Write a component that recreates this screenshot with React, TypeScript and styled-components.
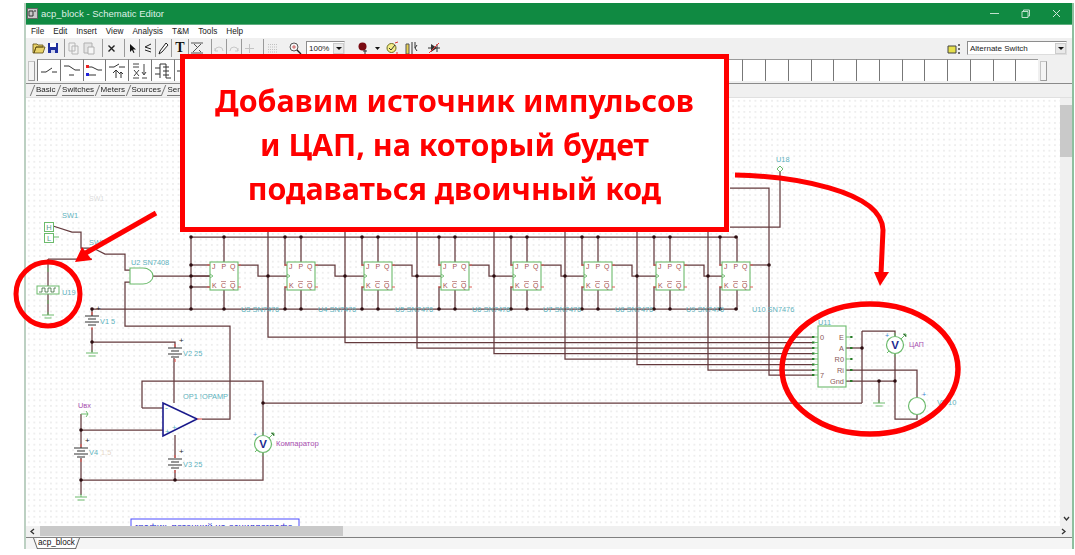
import React from "react";
import styled, { createGlobalStyle } from "styled-components";

const Global = createGlobalStyle`
  html, body { margin: 0; padding: 0; background: #fff; overflow: hidden; }
  body { font-family: "Liberation Sans", Arial, sans-serif; }
`;

const Page = styled.div`
  position: relative;
  width: 1075px;
  height: 555px;
  box-sizing: border-box;
  padding: 3px 1px 0 24px;
  overflow: hidden;
  background: #fff;
`;

const Win = styled.div`
  display: flex;
  flex-direction: column;
  height: 546px;
  border-left: 2px solid #bcd0c2;
  border-right: 2px solid #8fbf9f;
  filter: blur(0.4px);
`;

const TitleBar = styled.div`
  height: 21px;
  flex: none;
  display: flex;
  align-items: center;
  background: #108a42;
  border-bottom: 1px solid #5fae80;
  color: #dff0e6;
  font-size: 9.5px;
  padding-left: 1px;
`;
const TitleText = styled.span`
  margin-left: 3px;
  flex: 1;
`;
const WinControl = styled.span`
  width: 31px;
  display: flex;
  justify-content: center;
  align-items: center;
`;
const MenuBar = styled.div`
  height: 13px;
  flex: none;
  background: #fff;
  display: flex;
  align-items: center;
  padding-left: 5px;
  gap: 9px;
  font-size: 8.2px;
  color: #222;
`;
const Toolbar = styled.div`
  height: 20px;
  flex: none;
  background: #f0f0f0;
  display: flex;
  align-items: center;
  padding-left: 5px;
`;
const Tool = styled.div<{ $w?: number; $ml?: number; $box?: boolean }>`
  width: ${(p) => p.$w ?? 15}px;
  height: 18px;
  flex: none;
  margin-left: ${(p) => p.$ml ?? 0}px;
  display: flex;
  align-items: center;
  justify-content: center;
  box-sizing: border-box;
  border-left: ${(p) => (p.$box ? "1px solid #9a9a9a" : "none")};
`;
const Combo = styled.div<{ $w: number; $ml?: number }>`
  width: ${(p) => p.$w}px;
  height: 14px;
  flex: none;
  margin-left: ${(p) => p.$ml ?? 0}px;
  box-sizing: border-box;
  border: 1px solid #8d8d8d;
  border-right-color: #ddd;
  border-bottom-color: #ddd;
  background: #fff;
  display: flex;
  align-items: center;
  font-size: 8px;
  color: #222;
  padding-left: 2px;
`;
const ComboText = styled.span`
  flex: 1;
  white-space: nowrap;
`;
const ComboDrop = styled.span`
  width: 11px;
  height: 11px;
  background: #e9e9e9;
  border: 1px solid #ccc;
  box-sizing: border-box;
  display: flex;
  align-items: center;
  justify-content: center;
  &::after {
    content: "";
    border-left: 3px solid transparent;
    border-right: 3px solid transparent;
    border-top: 3px solid #111;
  }
`;
const Spacer = styled.div`
  flex: 1;
`;
const PaletteRow = styled.div`
  height: 26px;
  flex: none;
  background: #f0f0f0;
  display: flex;
  align-items: flex-end;
  padding: 0 0 2px 2px;
  box-sizing: border-box;
  border-bottom: 1px solid #8a8a8a;
`;
const Handle = styled.div<{ $ml: number; $mr?: number }>`
  width: 7px;
  height: 20px;
  flex: none;
  margin-left: ${(p) => p.$ml}px;
  margin-right: ${(p) => p.$mr ?? 0}px;
  background: #f4f4f4;
  border: 1px solid #c4c4c4;
  border-right-color: #9a9a9a;
  border-bottom-color: #9a9a9a;
  box-sizing: border-box;
`;
const Cell = styled.div`
  width: 22.75px;
  height: 22px;
  flex: none;
  box-sizing: border-box;
  background: #fff;
  border-left: 1px solid #777;
  border-top: 1px solid #9a9a9a;
  display: flex;
  align-items: center;
  justify-content: center;
`;
const TabRow = styled.div`
  height: 13px;
  flex: none;
  background: #f0f0f0;
  display: flex;
  padding-left: 10px;
  gap: 6.5px;
  align-items: center;
  font-size: 8px;
  color: #222;
  border-bottom: 1px solid #e0e0e0;
`;
const Tab = styled.span`
  position: relative;
  border-bottom: 1px solid #777;
  line-height: 10px;
  white-space: nowrap;
  &::before {
    content: "";
    position: absolute;
    left: -4px;
    top: 0;
    height: 11px;
    border-left: 1px solid #777;
    transform: skewX(-22deg);
  }
`;
const Middle = styled.div`
  flex: 1;
  min-height: 0;
  display: flex;
`;
const Canvas = styled.div`
  flex: 1;
  position: relative;
  overflow: hidden;
  background-color: #fff;
  background-image: radial-gradient(circle, #dcdcdc 0.55px, transparent 0.75px);
  background-size: 5.55px 5.55px;
`;
const VScroll = styled.div`
  width: 12px;
  flex: none;
  background: #f0f0f0;
  display: flex;
  flex-direction: column;
  align-items: center;
  padding: 5px 0 4px;
  box-sizing: border-box;
`;
const VThumb = styled.div`
  width: 100%;
  height: 52px;
  margin-top: 2px;
  background: #c9c9c9;
`;
const HScroll = styled.div`
  height: 12px;
  flex: none;
  background: #f0f0f0;
  display: flex;
  align-items: center;
  border-bottom: 1px solid #808080;
  box-sizing: border-box;
  padding: 0 5px 0 3px;
`;
const HThumb = styled.div`
  width: 303px;
  height: 10px;
  margin-left: 4px;
  background: #c9c9c9;
  align-self: flex-start;
`;
const BottomTabs = styled.div`
  height: 11px;
  flex: none;
  background: #f5f5f5;
  padding-left: 11px;
  font-size: 8.2px;
  color: #111;
`;
const SheetTab = styled.span`
  position: relative;
  display: inline-block;
  padding: 0 1px;
  height: 11px;
  line-height: 10px;
  background: #fff;
  border-bottom: 1px solid #777;
  box-sizing: border-box;
  &::before,
  &::after {
    content: "";
    position: absolute;
    top: 0;
    height: 11px;
    border-left: 1px solid #666;
  }
  &::before {
    left: -2px;
    transform: skewX(20deg);
  }
  &::after {
    right: -2px;
    transform: skewX(-20deg);
  }
`;
const Overlay = styled.svg`
  position: absolute;
  left: 0;
  top: 0;
  pointer-events: none;
`;
const Callout = styled.div`
  position: absolute;
  left: 180px;
  top: 54px;
  width: 549px;
  height: 178px;
  box-sizing: border-box;
  border: 5px solid #ff0000;
  padding-top: 3px;
  background: #fff;
  display: flex;
  flex-direction: column;
  justify-content: center;
  align-items: center;
  color: #ff0000;
  font-family: "Noto Sans", "Open Sans", sans-serif;
  font-weight: 700;
  font-size: 30.4px;
  line-height: 44px;
  filter: blur(0.25px);
`;
const Line = styled.div`
  white-space: nowrap;
`;

const Ic = ({ children, w = 14, h = 14 }: { children: React.ReactNode; w?: number; h?: number }) => (
  <svg width={w} height={h} viewBox={`0 0 ${w} ${h}`} fill="none">
    {children}
  </svg>
);
const Chevron = ({ d }: { d: string }) => (
  <Ic w={7} h={7}><path d={d} stroke="#333" strokeWidth="1.3" /></Ic>
);

const WIRE = "#643a3d";
const GREEN = "#6cbb6c";
const PIN = "#e0605a";
const TEAL = "#5eb2bd";
const PURPLE = "#a94fb0";

const ffX = [210, 287, 364, 441, 513, 584, 656, 722];
const ffLabel = [241, 318, 395, 472, 543, 615, 686, 752];
const outV = [268, 345, 417, 494, 565, 637, 708];
const pinYs = [337, 342.5, 348, 353.5, 359, 364.5, 370, 375];
const bus = [268, 345, 417, 494, 565, 637, 708, 769];

const wires = [
  "M53 226 L72 232 L81 232 L81 248 L93 248 L105 254 L125 254 L125 270 L130 270",
  "M48 259 L92 259",
  "M48 259 L48 286",
  "M48 294 L48 315",
  "M130 282 L125 282 L125 326 L230 326 L230 419 L202 419",
  "M153 276 L210 276",
  "M191 237 L737 237 L737 262",
  "M92 309 L737 309 L737 290",
  "M191 237 L191 309",
  "M191 265 L210 265",
  "M191 287 L210 287",
  "M191 276 L210 276",
  "M92 309 L92 316",
  "M92 328 L92 352",
  "M92 342 L175 342 L175 348",
  "M174 358 L174 403",
  "M142 408 L142 381 L263 381 L263 435",
  "M142 408 L163 408",
  "M263 453 L263 480 L81 480",
  "M81 414 L81 448",
  "M81 458 L81 495",
  "M81 430 L163 430",
  "M175 435 L175 458",
  "M175 470 L175 480",
  "M263 403 L862 403",
  "M730 188 L769 188 L769 375 L813 375",
  "M730 227 L780 227 L780 172",
  "M750 265 L769 265",
  "M846 348 L862 348",
  "M862 331 L862 403",
  "M862 331 L895 331 L895 336",
  "M895 354 L895 419 L917 419 L917 415",
  "M846 370 L917 370 L917 397",
  "M846 381 L895 381",
  "M879 381 L879 403",
];

const dots: [number, number][] = [
  [191, 237], [191, 265], [191, 276], [191, 287], [191, 309], [224, 237], [224, 309],
  [92, 309], [92, 342], [263, 403], [81, 430], [81, 480], [175, 480], [862, 348], [879, 381], [895, 381],
  [769, 265],
];

const Lbl = ({ x, y, children, fill = TEAL, size = 7.4 }: { x: number; y: number; children: React.ReactNode; fill?: string; size?: number }) => (
  <text x={x} y={y} fontSize={size} fill={fill} fontFamily="Liberation Sans, sans-serif">{children}</text>
);
const Battery = ({ x, y, label, lx, plus = true }: { x: number; y: number; label?: string; lx?: number; plus?: boolean }) => (
  <g>
    <path d={`M${x} ${y - 9}v3M${x} ${y + 6}v3`} stroke={PIN} strokeWidth="1.2" />
    <path d={`M${x - 7} ${y - 5}h14M${x - 4} ${y - 2}h8M${x - 7} ${y + 1}h14M${x - 4} ${y + 4}h8`} stroke="#333" strokeWidth="1.2" />
    {plus && <text x={x + 4} y={y - 10} fontSize="8" fill="#222">+</text>}
    {label && <Lbl x={lx ?? x + 8} y={y + 3}>{label}</Lbl>}
  </g>
);
const Ground = ({ x, y }: { x: number; y: number }) => (
  <path d={`M${x} ${y - 3}v3M${x - 6} ${y}h12M${x - 3.5} ${y + 3}h7`} stroke={GREEN} strokeWidth="1" />
);
const Meter = ({ x, y }: { x: number; y: number }) => (
  <g>
    <circle cx={x} cy={y} r="8.5" fill="#fff" stroke={GREEN} strokeWidth="1.2" />
    <path d={`M${x + 6} ${y - 6}l5 -5m-3 0h3v3M${x - 6} ${y + 6}l-2 2M${x} ${y - 12}v3M${x} ${y + 9}v3`} stroke={GREEN} strokeWidth="1" />
    <text x={x} y={y + 4} textAnchor="middle" fontSize="11.5" fontWeight="bold" fill="#1c2a90" fontFamily="Liberation Sans, sans-serif">V</text>
    <text x={x - 8} y={y - 7} textAnchor="middle" fontSize="7" fill="#3a7fd0">+</text>
  </g>
);
const FlipFlop = ({ x }: { x: number }) => (
  <g>
    <rect x={x} y={262} width={28} height={28} fill="#fff" stroke={GREEN} strokeWidth="1.1" />
    <path d={`M${x} 274l3 2l-3 2`} stroke={GREEN} fill="none" strokeWidth="0.9" />
    <g fontSize="7" fontFamily="Liberation Sans, sans-serif" fill="#a5504f">
      <text x={x + 2} y={269}>J</text>
      <text x={x + 11.5} y={269}>P</text>
      <text x={x + 20} y={269}>Q</text>
      <text x={x + 2} y={288}>K</text>
      <text x={x + 11} y={288}>C</text>
      <text x={x + 20} y={288}>Q</text>
    </g>
    <path d={`M${x + 11} 281.5h5M${x + 20} 281.5h5`} stroke="#a5504f" strokeWidth="0.6" />
    <path d={`M${x + 28} 265h3M${x + 28} 287h3M${x - 3} 265h3M${x - 3} 287h3`} stroke={PIN} strokeWidth="1.2" />
  </g>
);

const Schematic = () => (
  <svg width="1034" height="428" viewBox="26 98 1034 428" style={{ display: "block" }}>
    <text x="89" y="201" fontSize="7" fill="#dcdcdc" fontFamily="Liberation Sans, sans-serif">SW1</text>

    <g fill="none" stroke={WIRE} strokeWidth="1.25">
      {wires.map((d) => <path key={d} d={d} />)}
      {ffX.map((x, i) => {
        const jx = i === 0 ? 191 : x - 2;
        const px = i === 0 ? 224 : i === 7 ? 736 : x + 14;
        const next = ffX[i + 1];
        return (
          <g key={x}>
            {i > 0 && <path d={`M${jx} 237V265H${x}M${jx} 309V287H${x}`} />}
            {i < 7 && <path d={`M${px} 237V262M${px} 290V309`} />}
            {i < 7 && <path d={`M${x + 28} 265H${x + 48}V276H${next}`} />}
          </g>
        );
      })}
      {bus.slice(0, 7).map((x, i) => (
        <path key={x} d={`M${x} 226V${pinYs[i]}H813`} />
      ))}
    </g>

    {ffX.map((x) => <FlipFlop key={x} x={x} />)}

    <g fill="#2c0d10">
      {dots.map(([x, y]) => <circle key={`${x}-${y}`} cx={x} cy={y} r="1.8" />)}
      {ffX.slice(1).map((x, i) => {
        const jx = x - 2;
        const px = i === 6 ? 736 : x + 14;
        return (
          <g key={x}>
            <circle cx={jx} cy={237} r="1.8" />
            <circle cx={px} cy={237} r="1.8" />
            <circle cx={jx} cy={309} r="1.8" />
            <circle cx={px} cy={309} r="1.8" />
          </g>
        );
      })}
      {outV.map((x) => <circle key={x} cx={x} cy={276} r="1.8" />)}
    </g>

    {ffLabel.map((x, i) => <Lbl key={x} x={x} y={312}>{`U${i + 3} SN7476`}</Lbl>)}

    {/* switches */}
    <Lbl x={62} y={218}>SW1</Lbl>
    <Lbl x={89} y={245}>SW2</Lbl>
    <rect x="44.5" y="222.5" width="9" height="9" fill="#fff" stroke={GREEN} />
    <rect x="44.5" y="233.5" width="9" height="9" fill="#fff" stroke={GREEN} />
    <text x="49" y="230" textAnchor="middle" fontSize="7.5" fill="#5a9a8a">H</text>
    <text x="49" y="241" textAnchor="middle" fontSize="7.5" fill="#5a9a8a">L</text>
    <path d="M53 237h6" stroke={GREEN} />

    {/* U19 */}
    <rect x="37" y="286" width="22" height="8" fill="#fff" stroke={GREEN} />
    <path d="M39 292h3v-4h3v4h3v-4h3v4h3v-4h2" fill="none" stroke="#3b6b3b" strokeWidth="0.8" />
    <path d="M48 268v4M48 300v4" stroke={GREEN} />
    <Lbl x={62} y={295}>U19</Lbl>
    <Ground x={48} y={315} />

    {/* gate */}
    <path d="M130 268h13a10 8 0 0 1 0 16h-13z" fill="#fff" stroke={GREEN} strokeWidth="1.1" />
    <Lbl x={131} y={265}>U2 SN7408</Lbl>

    <Battery x={92} y={321} label="V1 5" lx={100} />
    <Ground x={92} y={353} />
    <Battery x={175} y={353} label="V2 25" lx={183} />
    <Battery x={175} y={464} label="V3 25" lx={183} />
    <Battery x={81} y={453} />
    <Lbl x={89} y={455}>V4</Lbl>
    <text x="101" y="455" fontSize="7.4" fill="#e6d8c8">1.5</text>
    <Ground x={81} y={497} />

    {/* op amp */}
    <path d="M163 403V436L197 419Z" fill="#fff" stroke="#1a1a8c" strokeWidth="1.6" />
    <text x="165" y="411" fontSize="9" fill="#5eb2bd">-</text>
    <text x="165" y="434" fontSize="8" fill="#5eb2bd">+</text>
    <text x="172" y="430" fontSize="8" fill="#5eb2bd">+</text>
    <path d="M197 419h5" stroke={PIN} strokeWidth="1.2" />
    <Lbl x={183} y={399}>OP1 !OPAMP</Lbl>
    <Lbl x={78} y={408} fill={PURPLE}>Uвх</Lbl>
    <path d="M81 414h7m-2 -3l2 3l-2 3" fill="none" stroke={GREEN} />
    <Meter x={263} y={444} />
    <Lbl x={276} y={446} fill={PURPLE} size={7.7}>Компаратор</Lbl>

    {/* U18 */}
    <Lbl x={776} y={162}>U18</Lbl>
    <path d="M780 166l3 3l-3 3l-3 -3z" fill="#fff" stroke={GREEN} />

    {/* U11 */}
    <rect x="818" y="326" width="28" height="61" fill="#fff" stroke={GREEN} strokeWidth="1.1" />
    <Lbl x={818} y={325}>U11</Lbl>
    <g fill="#2a7a2a">
      {pinYs.map((y) => <rect key={y} x="812" y={y - 1} width="2.5" height="2" />)}
      {[337, 348, 359, 370, 381].map((y) => <rect key={y} x="850" y={y - 1} width="2.5" height="2" />)}
    </g>
    <path d={`${pinYs.map((y) => `M814 ${y}h4`).join("")}M846 337h5M846 359h5`} stroke={GREEN} />
    <g fontSize="7.4" fontFamily="Liberation Sans, sans-serif" fill="#8c5a5a">
      <text x="820" y="340">0</text>
      <text x="820" y="378">7</text>
      <text x="844" y="340" textAnchor="end">E</text>
      <text x="844" y="351" textAnchor="end">A</text>
      <text x="844" y="362" textAnchor="end">R0</text>
      <text x="844" y="373" textAnchor="end">Ri</text>
      <text x="844" y="384" textAnchor="end">Gnd</text>
    </g>
    <Meter x={895} y={345} />
    <Lbl x={909} y={347} fill={PURPLE} size={7}>ЦАП</Lbl>
    <circle cx="917" cy="406" r="8.5" fill="#fff" stroke={GREEN} strokeWidth="1.2" />
    <text x="922" y="397" fontSize="7" fill="#3a7fd0">+</text>
    <Lbl x={937} y={405}>V5 10</Lbl>
    <Ground x={879} y={403} />

    {/* text box at the bottom */}
    <rect x="131" y="519" width="168" height="20" fill="#fff" stroke="#4d4dff" strokeWidth="1" />
    <text x="135" y="530" fontSize="9.5" fill="#2a2ad0" fontFamily="Liberation Sans, sans-serif">график, потенций на осциллографе</text>
  </svg>
);

const App = () => (
  <Page>
    <Global />
    <Win>
      <TitleBar>
        <Ic w={11} h={11}>
          <rect x="0.5" y="0.5" width="10" height="10" fill="#c9c9c9" stroke="#666" />
          <path d="M2 3h4v5H2zM7 3h2" stroke="#333" />
        </Ic>
        <TitleText>acp_block - Schematic Editor</TitleText>
        <WinControl>
          <Ic w={9} h={9}><path d="M0 4.5h9" stroke="#bfe0cc" /></Ic>
        </WinControl>
        <WinControl>
          <Ic w={9} h={9}><path d="M1 2.5h6v6H1zM2.5 2.5V1H8.5V7H7" stroke="#bfe0cc" /></Ic>
        </WinControl>
        <WinControl>
          <Ic w={9} h={9}><path d="M1 1l7 7M8 1l-7 7" stroke="#cfe8d9" /></Ic>
        </WinControl>
      </TitleBar>
      <MenuBar>
        <span>File</span><span>Edit</span><span>Insert</span><span>View</span><span>Analysis</span><span>T&amp;M</span><span>Tools</span><span>Help</span>
      </MenuBar>
      <Toolbar>
        <Tool $w={15}>
          <Ic><path d="M1 12V3h4l1 1h5v2H4L2 12zM2 12l2-6h9l-2 6z" fill="#e8d26a" stroke="#5a4a10" strokeWidth="0.8" /></Ic>
        </Tool>
        <Tool $w={13}>
          <Ic w={12} h={12}><path d="M1 1h10v10H1z" fill="#1f2f9e" /><path d="M3 1h6v4H3z" fill="#fff" /><path d="M4 8h4v3H4z" fill="#cfd3ee" /></Ic>
        </Tool>
        <Tool $w={17} $ml={5} $box>
          <Ic><path d="M3 2h6v8H3zM6 5h6v8H6z" fill="#f2f2f2" stroke="#b5b5b5" /></Ic>
        </Tool>
        <Tool $w={15}>
          <Ic><path d="M2 2h8v10H2z" fill="#e4e4e4" stroke="#b0b0b0" /><path d="M6 6h6v7H6z" fill="#f6f6f6" stroke="#b0b0b0" /></Ic>
        </Tool>
        <Tool $w={17} $ml={6} $box>
          <Ic w={9} h={9}><path d="M1.5 1.5l6 6M7.5 1.5l-6 6" stroke="#222" strokeWidth="1.4" /></Ic>
        </Tool>
        <Tool $w={15} $ml={5} $box>
          <Ic w={9} h={11}><path d="M2 1v8l2-2 1.5 3 1-.5L5 6.5h3z" fill="#111" /></Ic>
        </Tool>
        <Tool $w={16} $box>
          <Ic w={11} h={10}><path d="M9 1L3 4l6 2M3 7l6 2" stroke="#222" strokeWidth="1" fill="none" /></Ic>
        </Tool>
        <Tool $w={16} $box>
          <Ic w={11} h={13}><path d="M8 1l2 2-6 7-3 2 1-3z" fill="#fff" stroke="#222" /></Ic>
        </Tool>
        <Tool $w={17} $box>
          <span style={{ fontFamily: "Liberation Serif, serif", fontWeight: 700, fontSize: 14, color: "#111" }}>T</span>
        </Tool>
        <Tool $w={16} $box>
          <Ic><path d="M1 2h12M1 12h12M3 11L11 3M4 3l3 3M9 9l2 2" stroke="#555" strokeWidth="1" /></Ic>
        </Tool>
        <Tool $w={15} $ml={7} $box>
          <Ic w={12} h={10}><path d="M2 8a4 4 0 0 1 8 0M2 8V5M2 8h3" stroke="#c8c8c8" fill="none" /></Ic>
        </Tool>
        <Tool $w={15} $box>
          <Ic w={12} h={10}><path d="M2 8a4 4 0 0 1 8 0M10 8V5M10 8H7" stroke="#c8c8c8" fill="none" /></Ic>
        </Tool>
        <Tool $w={15} $box>
          <Ic w={11} h={11}><path d="M5.5 1v9M1 5.5h9" stroke="#c4c4c4" /></Ic>
        </Tool>
        <Tool $w={18} $ml={7} $box>
          <Ic w={13} h={11}>
            <path d="M2 1.5h9M2 4h9M2 6.5h9M2 9h9" stroke="#c0c0c0" strokeDasharray="1 1" />
          </Ic>
        </Tool>
        <Tool $w={17} $ml={5}>
          <Ic>
            <circle cx="6" cy="6" r="4" fill="#f4f4f4" stroke="#555" />
            <path d="M6 4v4M4 6h4" stroke="#c44" strokeWidth="0.8" />
            <path d="M9 9l4 4" stroke="#222" strokeWidth="1.5" />
          </Ic>
        </Tool>
        <Combo $w={39} $ml={3}>
          <ComboText>100%</ComboText>
          <ComboDrop />
        </Combo>
        <Tool $w={18} $ml={10}>
          <Ic>
            <circle cx="5.5" cy="5.5" r="4" fill="#7a0a12" />
            <path d="M6 10h4M8 9v4" stroke="#333" />
          </Ic>
        </Tool>
        <Tool $w={8}>
          <Ic w={5} h={3}><path d="M0 0h5L2.5 3z" fill="#111" /></Ic>
        </Tool>
        <Tool $w={16} $ml={3}>
          <Ic>
            <circle cx="6.5" cy="7" r="4.5" fill="#f5ee8a" stroke="#6b6b20" />
            <path d="M4 7l2 2 4-5" stroke="#333" fill="none" />
            <path d="M10 2l3-1M11 12h2" stroke="#d33" />
          </Ic>
        </Tool>
        <Tool $w={18} $ml={2}>
          <Ic w={16} h={14}>
            <path d="M3 3h3v10H3z" fill="#e8d050" stroke="#555" />
            <path d="M9 1v12M12 1v6l2-3m-2 3l2 3" stroke="#333" />
          </Ic>
        </Tool>
        <Tool $w={18} $ml={5}>
          <Ic>
            <path d="M1 7h12" stroke="#333" />
            <path d="M4 3v8l6-4z" fill="#333" />
            <path d="M10 3v8" stroke="#333" />
            <path d="M2 12L12 2" stroke="#e33" />
          </Ic>
        </Tool>
        <Spacer />
        <Tool $w={17}>
          <Ic w={15} h={13}>
            <path d="M1 4h8v7H1z" fill="#e6e04c" stroke="#444" />
            <path d="M12 2v2M12 6v2M12 10v2" stroke="#333" strokeWidth="1.4" />
          </Ic>
        </Tool>
        <Combo $w={100} $ml={4}>
          <ComboText>Alternate Switch</ComboText>
          <ComboDrop />
        </Combo>
        <Tool $w={5} />
      </Toolbar>
      <PaletteRow>
        <Handle $ml={0} $mr={2} />
        {Array.from({ length: 44 }, (_, i) => (
          <Cell key={i}>
            {i === 0 && <Ic w={18} h={12}><path d="M1 7h5l6-4M12 7h5" stroke="#333" /></Ic>}
            {i === 1 && <Ic w={18} h={16}><path d="M1 3h5l6 4h5M6 12h5" stroke="#333" /></Ic>}
            {i === 2 && (
              <Ic w={18} h={16}>
                <path d="M4 4h3l6 3h4M4 12h7" stroke="#333" />
                <rect x="1" y="2" width="3" height="3" fill="#e22" />
                <rect x="1" y="10" width="3" height="3" fill="#22d" />
              </Ic>
            )}
            {i === 3 && <Ic w={18} h={18}><path d="M1 5h5l5-3M11 5h6M8 8v8M5 11l3-3 3 3M13 10v6M11 12l2-2 2 2" stroke="#333" /></Ic>}
            {i === 4 && <Ic w={18} h={18}><path d="M2 2h6M2 5h6M3 8l5 6M8 8l-5 6M2 16h6M13 2v10M11 10l2 3 2-3M11 16h5" stroke="#444" /></Ic>}
            {i === 5 && <Ic w={18} h={18}><path d="M1 6h5V2h6v14M1 12h5M6 6v10M9 5h6M9 9h6M9 13h6M12 16h5" stroke="#333" /></Ic>}
            {i === 6 && <Ic w={18} h={12}><path d="M1 6h6" stroke="#333" /></Ic>}
          </Cell>
        ))}
        <Handle $ml={2} />
      </PaletteRow>
      <TabRow>
        <Tab>Basic</Tab><Tab>Switches</Tab><Tab>Meters</Tab><Tab>Sources</Tab><Tab>Semico</Tab>
      </TabRow>
      <Middle>
        <Canvas><Schematic /></Canvas>
        <VScroll>
          <VThumb />
          <Spacer />
          <Chevron d="M1 2l2.5 3L6 2" />
        </VScroll>
      </Middle>
      <HScroll>
        <Chevron d="M5 1L2 3.5L5 6" />
        <HThumb />
        <Spacer />
        <Chevron d="M2 1l3 2.5L2 6" />
      </HScroll>
      <BottomTabs><SheetTab>acp_block</SheetTab></BottomTabs>
    </Win>

    <Callout>
      <Line>Добавим источник импульсов</Line>
      <Line>и ЦАП, на который будет</Line>
      <Line>подаваться двоичный код</Line>
    </Callout>

    <Overlay width="1075" height="555" viewBox="0 0 1075 555" fill="none">
      <circle cx="48" cy="294" r="32" stroke="#ff0000" strokeWidth="5" />
      <path d="M156 213L84 254" stroke="#ff0000" strokeWidth="5" />
      <path d="M75 262L82 247L92 260Z" fill="#ff0000" />
      <ellipse cx="870" cy="369" rx="88" ry="65" stroke="#ff0000" strokeWidth="5.5" />
      <path d="M735 175C790 176 882 190 883 230L881 274" stroke="#ff0000" strokeWidth="5" />
      <path d="M874 272H889L880 286Z" fill="#ff0000" />
    </Overlay>
  </Page>
);

export default App;
